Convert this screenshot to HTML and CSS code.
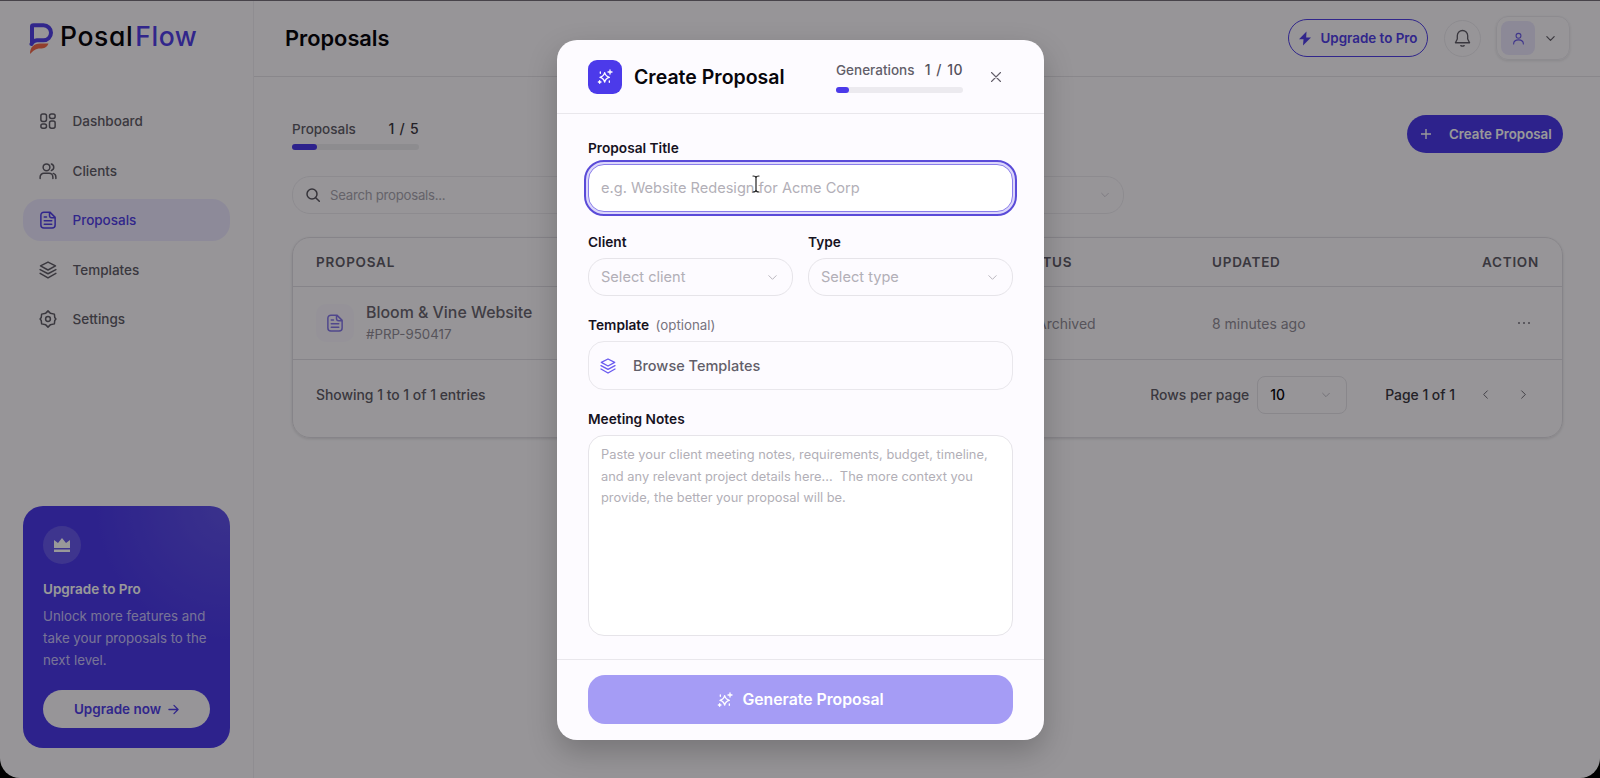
FILE: index.html
```html
<!DOCTYPE html>
<html lang="en">
<head>
    <meta charset="UTF-8">
    <meta name="viewport" content="width=device-width, initial-scale=1.0">
    <title>Proposals - PosalFlow</title>
    <link rel="stylesheet" href="styles.css">
</head>
<body>
    <!-- shared icons -->
    <svg class="sprite" width="0" height="0">
        <symbol id="i-grid" viewBox="0 0 24 24"><rect x="2.5" y="2.5" width="7.5" height="10" rx="2.5"/><rect x="14" y="2.5" width="7.5" height="6" rx="2.5"/><rect x="14" y="12" width="7.5" height="9.5" rx="2.5"/><rect x="2.5" y="16" width="7.5" height="5.5" rx="2.5"/></symbol>
        <symbol id="i-users" viewBox="0 0 24 24"><circle cx="10" cy="7" r="4.5"/><path d="M1.5 22v-2a5 5 0 0 1 5-5h7a5 5 0 0 1 5 5v2M16.500 2.700a4.500 4.500 0 0 1 0 8.600M22.500 22v-2a5 5 0 0 0-3.500-4.800"/></symbol>
        <symbol id="i-file" viewBox="0 0 24 24"><path d="M14.500 1.500H6.500a4 4 0 0 0-4 4v13a4 4 0 0 0 4 4h11a4 4 0 0 0 4-4v-10zM14 1.500V6a3 3 0 0 0 3 3h4.500M7 8h3M7 13h10M7 17.500h10"/></symbol>
        <symbol id="i-layers" viewBox="0 0 24 24"><path d="M12 1.500 22 6.500 12 12 2 6.500zM1.500 11.500 12 17l10.500-5.500M1.500 16.500 12 22.500l10.500-6"/></symbol>
        <symbol id="i-gear" viewBox="0 0 24 24"><path d="M12 1.200 15 4.200 20.500 5.500 21 10 22.500 12 21 14 20.500 18.500 15 19.800 12 22.800 9 19.800 3.500 18.500 3 14 1.500 12 3 10 3.500 5.500 9 4.200z"/><circle cx="12" cy="12" r="3.200"/></symbol>
        <symbol id="i-spark" viewBox="0 0 24 24"><path d="M11.500 5.500c1 4 3 6 7 7-4 1-6 3-7 7-1-4-3-6-7-7 4-1 6-3 7-7zM19.500 1.500v6M16.500 4.500h6M4 17.500v4M2 19.500h4M18.500 18v2M5 4.500v2"/></symbol>
        <symbol id="i-down" viewBox="0 0 24 24"><path d="m4 8 8 8 8-8"/></symbol>
        <symbol id="i-user" viewBox="0 0 24 24"><circle cx="12" cy="7" r="4.500"/><path d="M3 22c0-5 3.500-7.500 9-7.500s9 2.500 9 7.500"/></symbol>
    </svg>

    <div class="app">
        <aside class="sidebar">
            <div class="logo">
                <svg width="25" height="32" viewBox="0 0 25 32">
                    <path d="M3 20V3.500Q3 2.300 4.500 2.300H14.500a7.500 7.500 0 0 1 0 15H8Q4 17.500 2.500 21" fill="none" stroke="#5240e8" stroke-width="4"/>
                    <path d="M1 31C1 24 5 20.500 11 20.500H19.500C18 24.500 15 25.500 11.500 25.500 6 25.500 4 28 1 31z" fill="#f36a4e"/>
                </svg>
                <div class="logo-text"><span>Posal</span><span class="logo-accent">Flow</span></div>
            </div>
            <nav class="nav">
                <a class="nav-item"><svg class="icon"><use href="#i-grid"/></svg>Dashboard</a>
                <a class="nav-item"><svg class="icon"><use href="#i-users"/></svg>Clients</a>
                <a class="nav-item active"><svg class="icon"><use href="#i-file"/></svg>Proposals</a>
                <a class="nav-item"><svg class="icon"><use href="#i-layers"/></svg>Templates</a>
                <a class="nav-item"><svg class="icon"><use href="#i-gear"/></svg>Settings</a>
            </nav>
            <div class="upgrade-card">
                <div class="crown">
                    <svg width="18" height="16" viewBox="0 0 18 16"><path d="M1 3 5 6 9 1l4 5 4-3v8H1zM1 12.500h16V15H1z" fill="#fff"/></svg>
                </div>
                <h4>Upgrade to Pro</h4>
                <p>Unlock more features and<br>take your proposals to the<br>next level.</p>
                <button class="upgrade-now">Upgrade now
                    <svg width="11" height="11" viewBox="0 0 12 12"><path d="M1 6h10M6.500 1.500 11 6l-4.500 4.500"/></svg>
                </button>
            </div>
        </aside>

        <div class="main">
            <header class="topbar">
                <h1>Proposals</h1>
                <div class="top-actions">
                    <button class="btn-outline">
                        <svg width="14" height="15" viewBox="0 0 14 15"><path d="M8.500.5 1 8.300h4.500L5 14.500l8-8H8.200z"/></svg>
                        Upgrade to Pro
                    </button>
                    <button class="bell">
                        <svg width="17" height="19" viewBox="0 0 18 20"><path d="M9 1.500a5.500 5.500 0 0 0-5.500 5.500v3.500L1.500 14.500h15L14.500 10.500V7A5.500 5.500 0 0 0 9 1.500zM7.200 17.500q1.800 1 3.600 0"/></svg>
                    </button>
                    <button class="account">
                        <span class="avatar"><svg class="icon"><use href="#i-user"/></svg></span>
                        <svg class="icon chev"><use href="#i-down"/></svg>
                    </button>
                </div>
            </header>

            <div class="content">
                <div class="content-head">
                    <div class="usage">
                        <div class="usage-row"><span>Proposals</span><b>1 / 5</b></div>
                        <div class="bar"><div class="bar-fill" style="width: 20%"></div></div>
                    </div>
                    <button class="btn-create">
                        <svg width="10" height="10" viewBox="0 0 10 10"><path d="M5 0v10M0 5h10"/></svg>
                        Create Proposal
                    </button>
                </div>

                <div class="filters">
                    <div class="search">
                        <svg width="14" height="14" viewBox="0 0 14 14"><circle cx="6" cy="6" r="5"/><path d="m9.700 9.700 3.600 3.600"/></svg>
                        Search proposals...
                    </div>
                    <div class="filter-select"><span>All Status</span><svg class="icon"><use href="#i-down"/></svg></div>
                </div>

                <div class="table">
                    <div class="row row-head">
                        <span>PROPOSAL</span><span>STATUS</span><span>UPDATED</span><span class="right">ACTION</span>
                    </div>
                    <div class="row row-item">
                        <div class="proposal">
                            <span class="file"><svg class="icon"><use href="#i-file"/></svg></span>
                            <div>
                                <div class="name">Bloom &amp; Vine Website</div>
                                <div class="code">#PRP-950417</div>
                            </div>
                        </div>
                        <span class="status">Archived</span>
                        <span>8 minutes ago</span>
                        <span class="right dots"><i></i><i></i><i></i></span>
                    </div>
                    <div class="table-foot">
                        <span class="showing">Showing 1 to 1 of 1 entries</span>
                        <span class="rows-label">Rows per page</span>
                        <div class="rows-select">10<svg class="icon"><use href="#i-down"/></svg></div>
                        <span class="page-label">Page 1 of 1</span>
                        <span class="pager"><svg class="icon prev"><use href="#i-down"/></svg></span>
                        <span class="pager"><svg class="icon next"><use href="#i-down"/></svg></span>
                    </div>
                </div>
            </div>
        </div>
    </div>

    <div class="overlay">
        <div class="modal">
            <div class="modal-head">
                <span class="modal-icon"><svg class="icon"><use href="#i-spark"/></svg></span>
                <h2>Create Proposal</h2>
                <div class="usage">
                    <div class="usage-row"><span>Generations</span><b>1 / 10</b></div>
                    <div class="bar"><div class="bar-fill" style="width: 10%"></div></div>
                </div>
                <svg class="close" width="10" height="10" viewBox="0 0 10 10"><path d="m.5.5 9 9M9.500.5l-9 9"/></svg>
            </div>

            <div class="modal-body">
                <div class="field">
                    <label>Proposal Title</label>
                    <div class="input">e.g. Website Redesign for Acme Corp</div>
                </div>
                <div class="field-row">
                    <div class="field">
                        <label>Client</label>
                        <div class="select">Select client<svg class="icon"><use href="#i-down"/></svg></div>
                    </div>
                    <div class="field">
                        <label>Type</label>
                        <div class="select">Select type<svg class="icon"><use href="#i-down"/></svg></div>
                    </div>
                </div>
                <div class="field">
                    <label>Template <small>(optional)</small></label>
                    <div class="browse"><svg class="icon"><use href="#i-layers"/></svg>Browse Templates</div>
                </div>
                <div class="field">
                    <label>Meeting Notes</label>
                    <div class="textarea">Paste your client meeting notes, requirements, budget, timeline,<br>and any relevant project details here...&nbsp; The more context you<br>provide, the better your proposal will be.</div>
                </div>
            </div>

            <div class="modal-foot">
                <button class="generate"><svg class="icon"><use href="#i-spark"/></svg>Generate Proposal</button>
            </div>
        </div>
    </div>

    <!-- text cursor -->
    <svg class="cursor" width="8" height="18" viewBox="0 0 8 18"><path d="M1 1q3 0 3 2 0-2 3-2M4 3v12M1 17q3 0 3-2 0 2 3 2"/></svg>
</body>
</html>
```

FILE: styles.css
```css
* {
    box-sizing: border-box;
}
body {
    margin: 0;
    height: 778px;
    overflow: hidden;
    background: #000;
    font-family: Inter, "Liberation Sans", sans-serif;
    font-size: 13.5px;
    color: #625e69;
}
h1, h2, h4, p {
    margin: 0;
}
button {
    font: inherit;
    color: inherit;
    border: none;
    background: none;
    padding: 0;
}
.sprite {
    position: absolute;
}
svg {
    fill: none;
    stroke: currentColor;
    stroke-width: 1.4;
    stroke-linecap: round;
    stroke-linejoin: round;
    flex: none;
}
.icon {
    width: 18px;
    height: 18px;
    stroke-width: 2;
}

.app {
    display: flex;
    height: 778px;
    background: #fcf9fe;
    border-top: 1px solid #77717c;
    border-radius: 0 0 20px 20px;
    overflow: hidden;
}

/* sidebar */
.sidebar {
    width: 254px;
    display: flex;
    flex-direction: column;
    padding: 22px 23px 30px;
    border-right: 1px solid #eeebf2;
}
.logo {
    display: flex;
    gap: 6px;
    padding-left: 6px;
    height: 32px;
}
.logo svg {
    stroke: none;
}
.logo-text {
    font-size: 26.5px;
    line-height: 26px;
    font-weight: 500;
    letter-spacing: .6px;
    color: #08060c;
    font-feature-settings: "cv11";
}
.logo-accent {
    color: #5240e8;
    margin-left: 2px;
}
.nav {
    display: flex;
    flex-direction: column;
    gap: 7.5px;
    margin-top: 45px;
}
.nav-item {
    display: flex;
    align-items: center;
    gap: 16px;
    height: 42px;
    padding-left: 15.5px;
    border-radius: 18px;
    font-weight: 500;
}
.nav-item.active {
    background: #ebe6ff;
    color: #5240e8;
}
.upgrade-card {
    margin-top: auto;
    height: 242px;
    padding: 20px;
    border-radius: 20px;
    background: radial-gradient(circle at 100% 0, #6254ea 0, #4c3aea 42%);
    color: #fff;
}
.crown {
    display: flex;
    align-items: center;
    justify-content: center;
    width: 38px;
    height: 38px;
    border-radius: 50%;
    background: rgba(255, 255, 255, .16);
}
.crown svg {
    stroke: none;
}
.upgrade-card h4 {
    margin-top: 16px;
    font-size: 13.5px;
    line-height: 18px;
    font-weight: 600;
}
.upgrade-card p {
    margin-top: 7px;
    line-height: 22px;
    font-size: 13.3px;
    white-space: nowrap;
    color: #c8c1fa;
}
.upgrade-now {
    display: flex;
    align-items: center;
    justify-content: center;
    gap: 7px;
    width: 100%;
    height: 38px;
    margin-top: 19px;
    border-radius: 19px;
    background: #fcf9fe;
    color: #5240e8;
    font-weight: 600;
}

/* top bar */
.main {
    flex: 1;
}
.topbar {
    display: flex;
    align-items: center;
    justify-content: space-between;
    height: 76px;
    padding: 0 30px 1px 31px;
    border-bottom: 1px solid #e4e1e8;
}
.topbar h1 {
    font-size: 21.8px;
    font-weight: 600;
    color: #08060c;
}
.top-actions {
    display: flex;
    align-items: center;
    gap: 15.5px;
}
.btn-outline {
    display: flex;
    align-items: center;
    justify-content: center;
    gap: 8px;
    width: 140px;
    height: 38px;
    border: 1.5px solid #5240e8;
    border-radius: 19px;
    color: #5240e8;
    font-size: 13.4px;
    font-weight: 600;
}
.btn-outline svg {
    fill: currentColor;
    stroke: none;
}
.bell {
    display: flex;
    align-items: center;
    justify-content: center;
    width: 37px;
    height: 37px;
    border: 1px solid #ebe8ef;
    border-radius: 50%;
}
.account {
    display: flex;
    align-items: center;
    gap: 10px;
    width: 74px;
    height: 44px;
    padding-left: 4px;
    border: 1px solid #ebe8ef;
    border-radius: 12px;
    box-shadow: 0 1px 3px rgba(0, 0, 0, .1);
}
.avatar {
    display: flex;
    align-items: center;
    justify-content: center;
    width: 34px;
    height: 34px;
    border-radius: 8px;
    background: #e9e4fc;
    color: #6a5ae8;
}
.avatar .icon {
    width: 13px;
    height: 13px;
}
.chev {
    width: 11px;
    height: 11px;
    stroke-width: 2.6;
}

/* content */
.content {
    padding: 37px 37px 0 38px;
}
.content-head {
    display: flex;
    justify-content: space-between;
    height: 39px;
}
.usage {
    width: 127px;
}
.content-head .usage {
    padding-top: 5px;
}
.usage-row {
    display: flex;
    justify-content: space-between;
    line-height: 20px;
    font-weight: 500;
}
.usage-row b {
    font-size: 14px;
    font-weight: 500;
    color: #3b3742;
    letter-spacing: .3px;
    word-spacing: 1px;
}
.bar {
    height: 6px;
    margin-top: 5px;
    border-radius: 3px;
    background: #eceaef;
}
.bar-fill {
    height: 6px;
    border-radius: 3px;
    background: #4c3aea;
}
.btn-create {
    display: flex;
    align-items: center;
    gap: 18px;
    width: 156px;
    height: 38px;
    margin-top: 1px;
    padding-left: 14px;
    border-radius: 19px;
    background: #4c3aea;
    color: #fff;
    font-size: 13.3px;
    font-weight: 600;
    white-space: nowrap;
}
.filters {
    display: flex;
    gap: 12px;
    margin-top: 23px;
}
.search, .filter-select {
    display: flex;
    align-items: center;
    gap: 10px;
    width: 600px;
    height: 38px;
    padding: 0 13px;
    border: 1px solid #ebe8ef;
    border-radius: 18px;
    font-size: 13.2px;
    letter-spacing: -.25px;
    color: #a9a5b0;
}
.search svg {
    color: #5b5762;
    stroke-width: 1.5;
}
.filter-select {
    width: 220px;
    justify-content: space-between;
}
.filter-select .icon {
    width: 10px;
    height: 10px;
    color: #c9c5d0;
}
.table {
    height: 201px;
    margin-top: 23px;
    border: 1px solid #e0dde4;
    border-radius: 18px;
    box-shadow: 0 1px 3px rgba(0, 0, 0, .12);
}
.row {
    display: grid;
    grid-template-columns: 699px 197px 1fr 120px;
    align-items: center;
    padding: 0 23px;
    border-bottom: 1px solid #e0dde4;
}
.row-head {
    height: 49px;
    font-weight: 600;
    letter-spacing: .75px;
    font-size: 13.5px;
}
.row-item {
    height: 73px;
    font-size: 14px;
    color: #918d98;
}
.status {
    padding-left: 22px;
}
.right {
    text-align: right;
}
.dots {
    display: flex;
    justify-content: flex-end;
    gap: 2.5px;
    padding-right: 9px;
}
.dots i {
    width: 2.5px;
    height: 2.5px;
    border-radius: 50%;
    background: #77737e;
}
.proposal {
    display: flex;
    align-items: center;
    gap: 12px;
}
.file {
    display: flex;
    align-items: center;
    justify-content: center;
    width: 38px;
    height: 38px;
    border-radius: 10px;
    background: #f8f4fe;
    color: #8577ea;
}
.name {
    font-size: 15.9px;
    line-height: 22px;
    font-weight: 500;
    color: #6b6772;
}
.code {
    margin-bottom: 1px;
    font-size: 13.3px;
    line-height: 20px;
}
.table-foot {
    display: flex;
    align-items: center;
    height: 69px;
    padding: 0 20px 0 23px;
    font-size: 13.9px;
    font-weight: 500;
}
.showing {
    flex: 1;
}
.rows-select {
    display: flex;
    align-items: center;
    justify-content: space-between;
    width: 90px;
    height: 38px;
    margin: 0 38px 0 8px;
    padding: 0 15px 0 12px;
    border: 1px solid #e4e1e8;
    border-radius: 8px;
    color: #08060c;
}
.rows-select .icon {
    width: 10px;
    height: 10px;
    color: #b5b1bc;
}
.page-label {
    color: #3b3742;
    margin-right: 11px;
}
.pager {
    display: flex;
    align-items: center;
    justify-content: center;
    width: 38px;
}
.pager .icon {
    width: 11px;
    height: 11px;
}
.prev {
    transform: rotate(90deg);
}
.next {
    transform: rotate(-90deg);
}

/* create proposal dialog */
.overlay {
    position: absolute;
    inset: 0;
    display: flex;
    align-items: flex-start;
    padding: 40px 0 0 557px;
    background: rgba(0, 0, 0, .4);
}
.modal {
    width: 487px;
    height: 700px;
    display: flex;
    flex-direction: column;
    border-radius: 20px;
    background: #fdfbff;
    box-shadow: 0 12px 30px rgba(0, 0, 0, .22);
}
.modal-head {
    display: flex;
    align-items: center;
    height: 74px;
    padding: 0 43px 0 31px;
    border-bottom: 1px solid #e9e7ec;
}
.modal-icon {
    display: flex;
    align-items: center;
    justify-content: center;
    width: 34px;
    height: 34px;
    border-radius: 9px;
    background: #4c3aea;
    color: #fff;
}
.modal-icon .icon {
    width: 16px;
    height: 16px;
}
.modal-head h2 {
    flex: 1;
    margin-left: 12px;
    font-size: 19.5px;
    font-weight: 600;
    color: #08060c;
}
.modal-head .usage {
    margin-right: 28px;
}
.modal-head .bar {
    margin-top: 7px;
}
.modal-head .usage-row b {
    color: #55515c;
    letter-spacing: .5px;
}
.close {
    stroke-width: 1.1;
}
.modal-body {
    flex: 1;
    padding: 24.5px 31px 0;
}
.field {
    flex: 1;
}
.field label {
    display: block;
    line-height: 18px;
    font-size: 13.7px;
    font-weight: 600;
    color: #17131f;
}
.field label small {
    margin-left: 3px;
    font-size: 13.3px;
    font-weight: 400;
    color: #77737e;
}
.input {
    height: 48px;
    margin-top: 7.5px;
    padding-left: 12px;
    line-height: 47px;
    border: 1px solid #8a7eea;
    border-radius: 16px;
    outline: 2px solid #5a4bd8;
    outline-offset: 2px;
    box-shadow: 0 0 0 3px #dcd7fb;
    background: #fff;
    font-size: 14.6px;
    color: #b2afb7;
}
.field-row {
    display: flex;
    gap: 15px;
    margin: 21px 0 20px;
}
.select {
    display: flex;
    align-items: center;
    justify-content: space-between;
    height: 38px;
    margin-top: 7px;
    padding: 0 14px 0 12px;
    border: 1px solid #e6e4e9;
    border-radius: 18px;
    font-size: 14.6px;
    color: #b2afb7;
}
.select .icon {
    width: 11px;
    height: 11px;
}
.browse {
    display: flex;
    align-items: center;
    gap: 17px;
    height: 49px;
    margin: 7px 0 20px;
    padding-left: 11px;
    border: 1px solid #e9e7ec;
    border-radius: 16px;
    font-size: 14.5px;
    font-weight: 500;
}
.browse .icon {
    width: 16px;
    height: 16px;
    color: #6a5af0;
}
.textarea {
    height: 201px;
    margin-top: 7px;
    padding: 8px 12px;
    border: 1px solid #e6e4e9;
    border-radius: 16px;
    background: #fff;
    font-size: 12.85px;
    line-height: 21.5px;
    white-space: nowrap;
    color: #b2afb7;
}
.modal-foot {
    height: 81px;
    padding: 15px 31px 0;
    border-top: 1px solid #e9e7ec;
}
.generate {
    display: flex;
    align-items: center;
    justify-content: center;
    gap: 9px;
    width: 100%;
    height: 49px;
    border-radius: 17px;
    background: #a59cf5;
    color: #fff;
    font-size: 15.8px;
    font-weight: 600;
}
.generate .icon {
    width: 16px;
    height: 16px;
}
.cursor {
    position: absolute;
    left: 752px;
    top: 175px;
    stroke: #222;
    stroke-width: 1.2;
}
```
